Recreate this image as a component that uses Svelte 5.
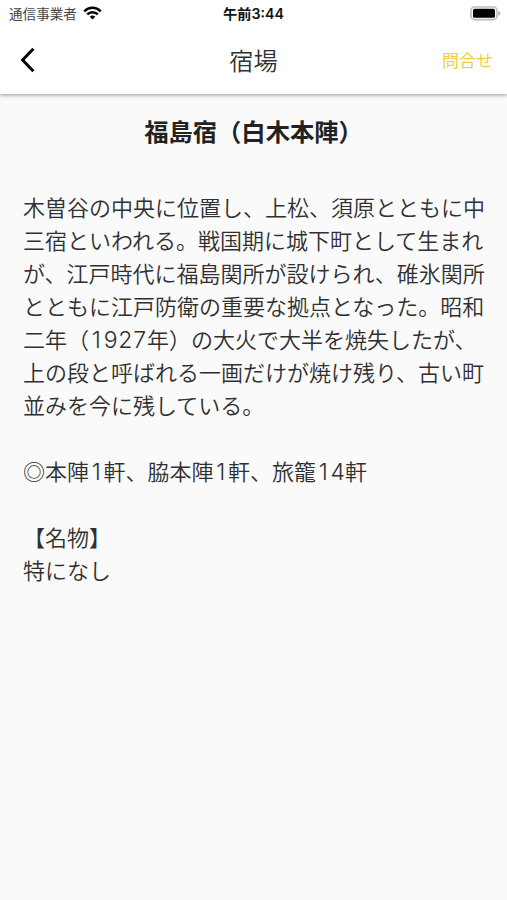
<script>
  const lines = [
    '木曽谷の中央に位置し、上松、須原とともに中',
    '三宿といわれる。戦国期に城下町として生まれ',
    'が、江戸時代に福島関所が設けられ、碓氷関所',
    'とともに江戸防衛の重要な拠点となった。昭和',
    '二年（1927年）の大火で大半を焼失したが、',
    '上の段と呼ばれる一画だけが焼け残り、古い町',
    '並みを今に残している。',
    '',
    '◎本陣1軒、脇本陣1軒、旅籠14軒',
    '',
    '【名物】',
    '特になし'
  ];
  const split = (line) => line.split(/(\d)/).filter(Boolean);
</script>

<div class="screen">
  <header>
    <div class="status">
      <div class="carrier">
        <span>通信事業者</span>
        <svg width="19" height="14" viewBox="0 0 19 14" fill="none" stroke="#050505" stroke-width="2.5">
          <path d="M1.2 5.3C5.9.6 13.1.6 17.8 5.3" />
          <path d="M4.2 8.4C7.2 5.5 11.8 5.5 14.8 8.4" />
          <path d="M6.7 10.8a4 4 0 0 1 5.6 0L9.5 13.6z" fill="#050505" stroke="none" />
        </svg>
      </div>
      <div class="time">午前3:44</div>
      <div class="battery">
        <svg width="32" height="15" viewBox="0 0 32 15">
          <rect x="1" y="1" width="26" height="12.6" rx="3.6" fill="#fff" stroke="#bdbdbd" stroke-width="1.6" />
          <rect x="3" y="2.8" width="22" height="9" rx="1.6" fill="#000" />
          <path d="M28.4 5c2.6 1 2.6 3.8 0 4.8z" fill="#aaa" />
        </svg>
      </div>
    </div>
    <nav>
      <div class="back">
        <svg width="16" height="26" viewBox="0 0 16 26" fill="none" stroke="#050505" stroke-width="3">
          <path d="M13.4 1.8 2.6 13l10.8 11.2" />
        </svg>
      </div>
      <h1>宿場</h1>
      <div class="contact">問合せ</div>
    </nav>
  </header>
  <main>
    <h2>福島宿（白木本陣）</h2>
    <div class="body">
      {#each lines as line}
        <div class="line">{#each split(line) as part}{#if /^\d/.test(part)}<span class="num">{part}</span>{:else}{part}{/if}{/each}</div>
      {/each}
    </div>
  </main>
</div>

<style>
  :global(body) {
    margin: 0;
    background: #fafafa;
  }
  .screen {
    height: 900px;
    overflow: hidden;
    background: #fafafa;
    color: #303030;
    font-family: 'Noto Sans CJK JP', sans-serif;
    text-spacing-trim: space-all;
  }
  header {
    height: 94px;
    background: #fff;
    box-shadow: 0 1px 4px rgba(0, 0, 0, 0.42);
  }
  .status,
  nav {
    display: grid;
    grid-template-columns: 1fr auto 1fr;
    align-items: center;
  }
  .status {
    height: 27px;
  }
  .carrier {
    display: flex;
    align-items: center;
    gap: 6px;
    padding-left: 9px;
    font-size: 13.6px;
    line-height: 27px;
    color: #444;
  }
  .carrier svg {
    margin-bottom: 1px;
  }
  .time {
    font-family: Inter, 'Noto Sans CJK JP', sans-serif;
    font-size: 14.2px;
    font-weight: 600;
    line-height: 27px;
    color: #111;
  }
  .battery {
    display: flex;
    justify-content: flex-end;
    padding-right: 5px;
  }
  nav {
    height: 66px;
  }
  .back {
    display: flex;
    padding-left: 20px;
  }
  h1 {
    margin: 0;
    font-size: 24.2px;
    font-weight: 350;
    line-height: 66px;
    color: #303030;
  }
  .contact {
    padding: 0 14px 1px 0;
    text-align: right;
    font-size: 17px;
    color: #f8cb3c;
  }
  main {
    padding: 20px 22px 0 23px;
  }
  h2 {
    margin: 0 1px 42px 0;
    text-align: center;
    white-space: nowrap;
    font-size: 24.3px;
    font-weight: 700;
    line-height: 34px;
    color: #222;
  }
  .body {
    font-size: 22px;
    font-weight: 350;
    line-height: 33px;
  }
  .line {
    height: 33px;
    white-space: nowrap;
  }
  .num {
    display: inline-block;
    width: 14.5px;
    font-family: Inter, sans-serif;
    font-size: 23px;
    text-align: center;
    line-height: 1;
  }
</style>
